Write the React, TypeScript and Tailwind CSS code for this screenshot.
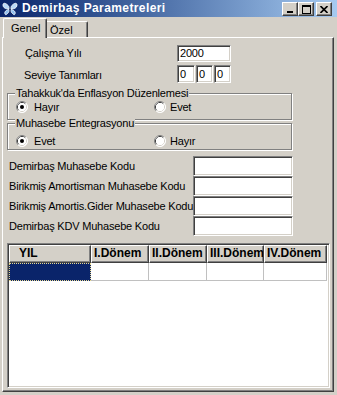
import React from "react";

const FONT = "font-['Liberation_Sans',Arial,sans-serif]";
const SUNKEN =
  "bg-white border border-t-[#808080] border-l-[#808080] border-b-white border-r-white shadow-[inset_1px_1px_0_#404040,inset_-1px_-1px_0_#d4d0c8]";

function Radio({ checked }: { checked: boolean }) {
  return (
    <svg width="12" height="12" viewBox="0 0 12 12" className="shrink-0">
      <circle cx="6" cy="6" r="5.5" fill="#ffffff" />
      <path d="M2.11 9.89 A5.5 5.5 0 0 1 9.89 2.11" fill="none" stroke="#808080" strokeWidth="1" />
      <path d="M9.89 2.11 A5.5 5.5 0 0 1 2.11 9.89" fill="none" stroke="#ffffff" strokeWidth="1" />
      <path d="M2.82 9.18 A4.5 4.5 0 0 1 9.18 2.82" fill="none" stroke="#404040" strokeWidth="1" />
      <path d="M9.18 2.82 A4.5 4.5 0 0 1 2.82 9.18" fill="none" stroke="#d4d0c8" strokeWidth="1" />
      <circle cx="6" cy="6" r="4" fill="#ffffff" />
      {checked && <circle cx="6" cy="6" r="2" fill="#000000" />}
    </svg>
  );
}

function TitleButton({ children, className = "" }: { children: React.ReactNode; className?: string }) {
  return (
    <div
      className={
        "w-[16px] h-[14px] bg-[#d4d0c8] border border-t-white border-l-white border-r-[#404040] border-b-[#404040] shadow-[inset_-1px_-1px_0_#808080] flex items-center justify-center " +
        className
      }
    >
      {children}
    </div>
  );
}

function Butterfly() {
  return (
    <svg width="16" height="16" viewBox="0 0 16 16">
      <path d="M8 7 C5 2 1 1 1 4 C1 7 4 8 7 8 Z" fill="#b8d8f8" stroke="#ffffff" strokeWidth="0.8" />
      <path d="M8 7 C11 2 15 1 15 4 C15 7 12 8 9 8 Z" fill="#b8d8f8" stroke="#ffffff" strokeWidth="0.8" />
      <path d="M7 8.5 C4 9 2 11 3 13 C4 15 6 12 7.5 10 Z" fill="#90c0f0" stroke="#ffffff" strokeWidth="0.8" />
      <path d="M9 8.5 C12 9 14 11 13 13 C12 15 10 12 8.5 10 Z" fill="#90c0f0" stroke="#ffffff" strokeWidth="0.8" />
      <rect x="7.4" y="5" width="1.2" height="7" fill="#203060" />
    </svg>
  );
}

function GroupBox({
  title,
  options,
  padTop,
}: {
  title: string;
  options: { label: string; checked: boolean }[];
  padTop: string;
}) {
  return (
    <div className="relative ml-[4px] w-[285px] h-[27px] border border-[#808080] shadow-[inset_1px_1px_0_#ffffff,1px_1px_0_#ffffff]">
      <span className="absolute left-[7px] top-[-8px] px-[1px] bg-[#d4d0c8] leading-[14px] whitespace-nowrap">
        {title}
      </span>
      <div className={"flex items-center pl-[8px] " + padTop}>
        <div className="w-[138px] flex items-center gap-[6px] h-[12px]">
          <Radio checked={options[0].checked} />
          <span className="leading-[12px]">{options[0].label}</span>
        </div>
        <div className="flex items-center gap-[4px] h-[12px]">
          <Radio checked={options[1].checked} />
          <span className="leading-[12px]">{options[1].label}</span>
        </div>
      </div>
    </div>
  );
}

export default function App() {
  const codeRows = [
    "Demirbaş Muhasebe Kodu",
    "Birikmiş Amortisman Muhasebe Kodu",
    "Birikmiş Amortis.Gider Muhasebe Kodu",
    "Demirbaş KDV Muhasebe Kodu",
  ];
  const cols = [
    { name: "YIL", w: "w-[82px]", pad: "pl-[9px]" },
    { name: "I.Dönem", w: "w-[58px]", pad: "pl-[2px]" },
    { name: "II.Dönem", w: "w-[58px]", pad: "pl-[2px]" },
    { name: "III.Dönem", w: "w-[57px]", pad: "pl-[2px]" },
    { name: "IV.Dönem", w: "w-[63px]", pad: "pl-[2px]" },
  ];
  return (
    <div
      className={
        "w-[337px] h-[395px] bg-[#d4d0c8] flex flex-col overflow-hidden text-[11px] tracking-[-0.2px] text-black " +
        FONT
      }
    >
      {/* Title bar */}
      <div className="h-[17px] flex items-start bg-linear-to-r from-[#0a246a] to-[#a6caf0] shrink-0">
        <div className="pl-[2px] pt-[1px]">
          <Butterfly />
        </div>
        <span className="ml-[4px] text-white font-bold text-[12px] tracking-[0.4px] leading-[17px] whitespace-nowrap">
          Demirbaş Parametreleri
        </span>
        <div className="ml-auto flex mt-[2px] pr-[5px]">
          <TitleButton>
            <svg width="8" height="7" viewBox="0 0 8 7">
              <rect x="1" y="5" width="6" height="2" fill="#000" />
            </svg>
          </TitleButton>
          <TitleButton>
            <svg width="9" height="9" viewBox="0 0 9 9">
              <rect x="0.5" y="0.5" width="8" height="8" fill="none" stroke="#000" />
              <rect x="0" y="1" width="9" height="1" fill="#000" />
            </svg>
          </TitleButton>
          <TitleButton className="ml-[2px]">
            <svg width="8" height="7" viewBox="0 0 8 7">
              <path d="M0.5 0 L7.5 7 M7.5 0 L0.5 7" stroke="#000" strokeWidth="1.6" />
            </svg>
          </TitleButton>
        </div>
      </div>

      {/* Tab strip */}
      <div className="h-[21px] flex items-end pl-[3px] relative z-10 shrink-0">
        <div className="w-[44px] h-[20px] bg-[#d4d0c8] border-l border-t border-r border-l-white border-t-white border-r-[#404040] rounded-t-[2px] shadow-[inset_-1px_0_0_#808080] pl-[7px] pt-[2px] leading-[14px] tracking-[0px]">
          Genel
        </div>
        <div className="w-[41px] h-[16px] mb-[1px] bg-[#d4d0c8] border-t border-r border-t-white border-r-[#404040] rounded-tr-[2px] shadow-[inset_-1px_0_0_#808080] pl-[3px] pt-[2px] leading-[13px] tracking-[0px]">
          Özel
        </div>
      </div>

      {/* Panel */}
      <div className="ml-[2px] w-[332px] h-[355px] -mt-[1px] border border-t-white border-l-white border-r-[#404040] border-b-[#404040] shadow-[inset_-1px_-1px_0_#808080] flex flex-col shrink-0">
        <div className="flex items-center mt-[7px]">
          <div className="w-[174px] pl-[22px] leading-[13px]">Çalışma Yılı</div>
          <div className={"w-[54px] h-[17px] pl-[2px] leading-[15px] " + SUNKEN}>2000</div>
        </div>
        <div className="flex items-center mt-[3px]">
          <div className="w-[174px] pl-[21px] leading-[13px] pt-[2px]">Seviye Tanımları</div>
          <div className="flex gap-[1px]">
            <div className={"w-[18px] h-[18px] pl-[2px] leading-[16px] " + SUNKEN}>0</div>
            <div className={"w-[17px] h-[18px] pl-[2px] leading-[16px] " + SUNKEN}>0</div>
            <div className={"w-[17px] h-[18px] pl-[2px] leading-[16px] " + SUNKEN}>0</div>
          </div>
        </div>

        <div className="mt-[10px]">
          <GroupBox
            title="Tahakkuk'da Enflasyon Düzenlemesi"
            padTop="pt-[7px]"
            options={[
              { label: "Hayır", checked: true },
              { label: "Evet", checked: false },
            ]}
          />
        </div>
        <div className="mt-[3px]">
          <GroupBox
            title="Muhasebe Entegrasyonu"
            padTop="pt-[11px]"
            options={[
              { label: "Evet", checked: true },
              { label: "Hayır", checked: false },
            ]}
          />
        </div>

        <div className="mt-[6px] flex flex-col">
          {codeRows.map((r) => (
            <div key={r} className="flex items-center h-[20px]">
              <div className="w-[190px] pl-[6px] whitespace-nowrap leading-[13px]">{r}</div>
              <div className={"w-[100px] h-[20px] " + SUNKEN} />
            </div>
          ))}
        </div>

        {/* Grid */}
        <div className={"mt-[7px] ml-[4px] w-[323px] h-[145px] p-[1px] flex flex-col " + SUNKEN}>
          <div className="flex h-[18px]">
            {cols.map((c) => (
              <div
                key={c.name}
                className={
                  c.w +
                  " " +
                  c.pad +
                  " h-[18px] bg-[#d4d0c8] border border-t-white border-l-white border-r-[#404040] border-b-[#404040] shadow-[inset_-1px_-1px_0_#808080] font-bold whitespace-nowrap overflow-hidden leading-[15px] text-[12px] tracking-[0px]"
                }
              >
                {c.name}
              </div>
            ))}
          </div>
          <div className="flex h-[18px]">
            {cols.map((c, i) =>
              i === 0 ? (
                <div
                  key={c.name}
                  className={c.w + " h-[18px] bg-[#0a246a] border border-dotted border-[#e8d890]"}
                />
              ) : (
                <div key={c.name} className={c.w + " h-[18px] bg-white border-r border-b border-[#c0c0c0]"} />
              )
            )}
          </div>
        </div>
      </div>
    </div>
  );
}
